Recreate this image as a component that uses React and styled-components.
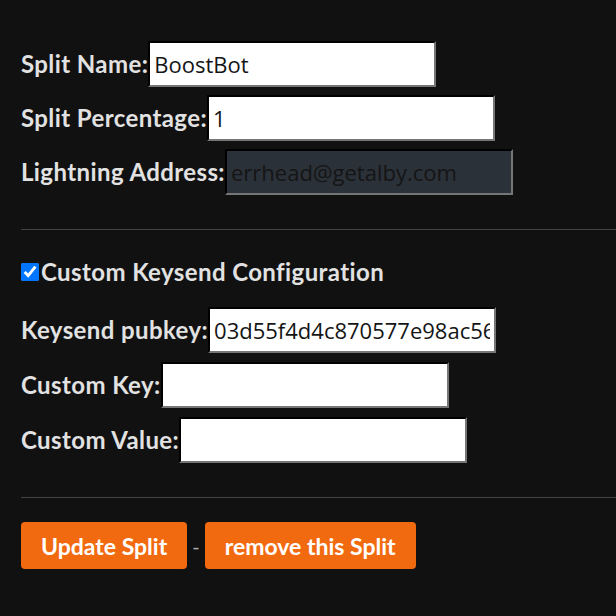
import React from "react";
import styled, { createGlobalStyle } from "styled-components";

const GlobalStyle = createGlobalStyle`
  html, body {
    margin: 0;
    background: #111111;
  }
  body {
    font-family: Lato, "Noto Sans", sans-serif;
    color: #e2e2e2;
  }
`;

const Root = styled.div`
  padding: 41px 0 40px 21px;
`;

const Section = styled.div`
  display: flex;
  flex-direction: column;
  gap: ${(p) => p.$gap || 8}px;
`;

const Row = styled.label`
  display: flex;
  align-items: center;
  font-size: 24px;
  line-height: 30px;
  letter-spacing: 0.4px;
  font-weight: 700;
  color: #e2e2e2;
`;

const TextInput = styled.input`
  box-sizing: border-box;
  width: 288px;
  height: 46px;
  padding: 1px 4px;
  margin: 0;
  border: 2px inset #767676;
  border-top-color: #262626;
  border-left-color: #262626;
  background: ${(p) => (p.$dark ? "#2b3139" : "#ffffff")};
  color: #151515;
  font-family: "Open Sans", "Noto Sans", sans-serif;
  font-size: 22px;
  letter-spacing: 0;
  outline: none;
`;

const Divider = styled.hr`
  border: none;
  border-top: 1px solid #444;
  margin: ${(p) => p.$margin};
`;

const CheckRow = styled.label`
  display: flex;
  align-items: center;
  font-size: 24px;
  line-height: 30px;
  letter-spacing: 0.4px;
  font-weight: 700;
  color: #e2e2e2;
  margin-bottom: 20px;
`;

const Check = styled.input`
  width: 18px;
  height: 18px;
  margin: 0 2px 0 0;
  accent-color: #0075ff;
`;

const Actions = styled.div`
  display: flex;
  align-items: center;
  gap: 5px;
`;

const Button = styled.button`
  height: 47px;
  padding: 0 20px;
  border: none;
  border-radius: 4px;
  background: #f26a10;
  color: #ffffff;
  font-family: Lato, "Noto Sans", sans-serif;
  font-size: 23px;
  font-weight: 700;
`;

const Dash = styled.span`
  color: #b0b0b0;
  font-size: 20px;
`;

export default function App() {
  return (
    <Root>
      <GlobalStyle />
      <Section>
        <Row>
          Split Name:
          <TextInput defaultValue="BoostBot" />
        </Row>
        <Row>
          Split Percentage:
          <TextInput defaultValue="1" />
        </Row>
        <Row>
          Lightning Address:
          <TextInput $dark defaultValue="errhead@getalby.com" />
        </Row>
      </Section>
      <Divider $margin="34px 0 27px" />
      <CheckRow>
        <Check type="checkbox" defaultChecked />
        Custom Keysend Configuration
      </CheckRow>
      <Section $gap={9}>
        <Row>
          Keysend pubkey:
          <TextInput defaultValue="03d55f4d4c870577e98ac56605a0dc5ab9fb0c4e2ff3cc9d3a8d0b1e7e2bcbe7" />
        </Row>
        <Row>
          Custom Key:
          <TextInput />
        </Row>
        <Row>
          Custom Value:
          <TextInput />
        </Row>
      </Section>
      <Divider $margin="34px 0 24px" />
      <Actions>
        <Button>Update Split</Button>
        <Dash>-</Dash>
        <Button>remove this Split</Button>
      </Actions>
    </Root>
  );
}
